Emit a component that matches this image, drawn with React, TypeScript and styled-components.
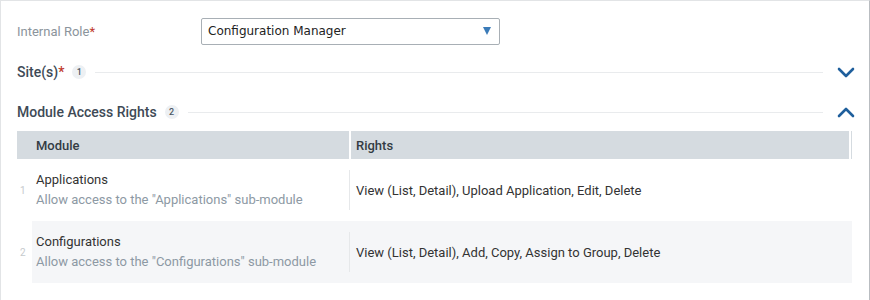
import React from "react";
import styled, { createGlobalStyle } from "styled-components";

const Global = createGlobalStyle`
  html, body { margin: 0; padding: 0; background: #fff; }
  body { font-family: Roboto, "Noto Sans", Arial, sans-serif; }
`;

const Frame = styled.div`
  width: 870px;
  height: 300px;
  box-sizing: border-box;
  border-top: 1px solid #e2e4e6;
  border-left: 1px solid #e2e4e6;
  border-right: 1px solid #b9bdc1;
  padding: 16px 16px 0 16px;
  overflow: hidden;
`;

const FieldRow = styled.div`
  display: flex;
  align-items: center;
  height: 28px;
`;

const FieldLabel = styled.div`
  width: 184px;
  font-size: 13px;
  color: #8b949c;
`;

const Req = styled.span`
  color: #c0392b;
`;

const Select = styled.div`
  width: 299px;
  height: 27px;
  box-sizing: border-box;
  border: 1px solid #a8afb5;
  border-radius: 2px;
  display: flex;
  align-items: center;
  justify-content: space-between;
  padding: 0 8px 0 6px;
  font-family: "DejaVu Sans", Verdana, sans-serif;
  font-size: 12px;
  color: #222;
`;

const Caret = styled.span`
  width: 0;
  height: 0;
  border-left: 4px solid transparent;
  border-right: 4px solid transparent;
  border-top: 8px solid #3b7bb8;
`;

const SectionHead = styled.div<{ $top: number }>`
  display: flex;
  align-items: center;
  height: 24px;
  margin-top: ${(p) => p.$top}px;
`;

const SectionTitle = styled.div`
  font-size: 14px;
  font-weight: 500;
  color: #3e4a56;
`;

const Badge = styled.span`
  display: inline-flex;
  align-items: center;
  justify-content: center;
  width: 14px;
  height: 14px;
  border-radius: 50%;
  background: #edf0f3;
  color: #4a5662;
  font-size: 9px;
  font-weight: 500;
  margin-left: 8px;
`;

const Rule = styled.div`
  flex: 1;
  height: 1px;
  background: #e9ebed;
  margin: 0 14px 0 9px;
`;

const Chevron = styled.svg`
  width: 18px;
  height: 12px;
  margin-right: -2px;
`;

const Table = styled.div`
  margin-top: 7px;
  width: 835px;
`;

const HeadRow = styled.div`
  display: grid;
  grid-template-columns: 332px 1fr;
  height: 28px;
  background: #d5dbe0;
  align-items: center;
  font-size: 13px;
  font-weight: 500;
  color: #333c44;
`;

const HeadCell = styled.div<{ $pad: number; $divider?: boolean }>`
  padding-left: ${(p) => p.$pad}px;
  height: 100%;
  display: flex;
  align-items: center;
  ${(p) => (p.$divider ? "border-left: 2px solid #fff;" : "")}
  ${(p) => (p.$divider ? "border-right: 2px solid #fff; margin-right: 1px;" : "")}
`;

const BodyRow = styled.div`
  display: grid;
  grid-template-columns: 15px 317px 1fr;
  height: 62px;
`;

const Index = styled.div`
  display: flex;
  align-items: center;
  padding-left: 3px;
  font-size: 10px;
  color: #c6cacd;
`;

const ModuleCell = styled.div<{ $alt: boolean }>`
  background: ${(p) => (p.$alt ? "#f5f6f8" : "#fff")};
  display: flex;
  flex-direction: column;
  justify-content: center;
  padding-left: 4px;
  font-size: 13px;
  line-height: 20px;
`;

const ModuleName = styled.div`
  color: #333;
`;

const ModuleDesc = styled.div`
  color: #8d99a4;
`;

const RightsCell = styled.div<{ $alt: boolean }>`
  background: ${(p) => (p.$alt ? "#f5f6f8" : "#fff")};
  display: flex;
  align-items: center;
  font-size: 13px;
  color: #333;
  padding: 11px 0;
  box-sizing: border-box;
`;

const RightsText = styled.div`
  border-left: 1px solid #e6e8ea;
  height: 100%;
  display: flex;
  align-items: center;
  padding-left: 6px;
`;

const ChevronIcon = ({ up }: { up?: boolean }) => (
  <Chevron viewBox="0 0 18 12">
    <path
      d={up ? "M2 10 L9 3 L16 10" : "M2 3 L9 10 L16 3"}
      fill="none"
      stroke="#1f5f9c"
      strokeWidth="2.6"
      strokeLinecap="round"
      strokeLinejoin="round"
    />
  </Chevron>
);

const rows = [
  {
    name: "Applications",
    desc: 'Allow access to the "Applications" sub-module',
    rights: "View (List, Detail), Upload Application, Edit, Delete",
  },
  {
    name: "Configurations",
    desc: 'Allow access to the "Configurations" sub-module',
    rights: "View (List, Detail), Add, Copy, Assign to Group, Delete",
  },
];

export default function App() {
  return (
    <>
      <Global />
      <Frame>
        <FieldRow>
          <FieldLabel>
            Internal Role<Req>*</Req>
          </FieldLabel>
          <Select>
            <span>Configuration Manager</span>
            <Caret />
          </Select>
        </FieldRow>
        <SectionHead $top={15}>
          <SectionTitle>
            Site(s)<Req>*</Req>
          </SectionTitle>
          <Badge>1</Badge>
          <Rule />
          <ChevronIcon />
        </SectionHead>
        <SectionHead $top={16}>
          <SectionTitle>Module Access Rights</SectionTitle>
          <Badge>2</Badge>
          <Rule />
          <ChevronIcon up />
        </SectionHead>
        <Table>
          <HeadRow>
            <HeadCell $pad={19}>Module</HeadCell>
            <HeadCell $pad={5} $divider>
              Rights
            </HeadCell>
          </HeadRow>
          {rows.map((r, i) => (
            <BodyRow key={r.name}>
              <Index>{i + 1}</Index>
              <ModuleCell $alt={i % 2 === 1}>
                <ModuleName>{r.name}</ModuleName>
                <ModuleDesc>{r.desc}</ModuleDesc>
              </ModuleCell>
              <RightsCell $alt={i % 2 === 1}>
                <RightsText>{r.rights}</RightsText>
              </RightsCell>
            </BodyRow>
          ))}
        </Table>
      </Frame>
    </>
  );
}
